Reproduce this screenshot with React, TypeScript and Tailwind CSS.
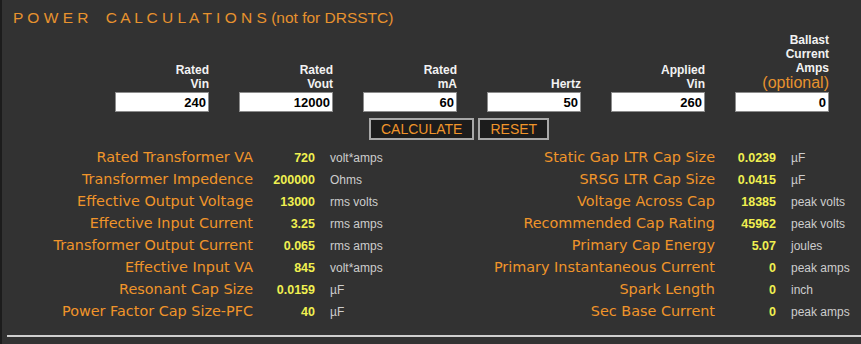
const inputs = [
  { label: ["Rated", "Vin"], value: "240" },
  { label: ["Rated", "Vout"], value: "12000" },
  { label: ["Rated", "mA"], value: "60" },
  { label: ["Hertz"], value: "50" },
  { label: ["Applied", "Vin"], value: "260" },
  { label: ["Ballast", "Current", "Amps"], value: "0", optional: true },
];

const leftRows = [
  ["Rated Transformer VA", "720", "volt*amps"],
  ["Transformer Impedence", "200000", "Ohms"],
  ["Effective Output Voltage", "13000", "rms volts"],
  ["Effective Input Current", "3.25", "rms amps"],
  ["Transformer Output Current", "0.065", "rms amps"],
  ["Effective Input VA", "845", "volt*amps"],
  ["Resonant Cap Size", "0.0159", "µF"],
  ["Power Factor Cap Size-PFC", "40", "µF"],
];

const rightRows = [
  ["Static Gap LTR Cap Size", "0.0239", "µF"],
  ["SRSG LTR Cap Size", "0.0415", "µF"],
  ["Voltage Across Cap", "18385", "peak volts"],
  ["Recommended Cap Rating", "45962", "peak volts"],
  ["Primary Cap Energy", "5.07", "joules"],
  ["Primary Instantaneous Current", "0", "peak amps"],
  ["Spark Length", "0", "inch"],
  ["Sec Base Current", "0", "peak amps"],
];

function ResultRow({
  row,
  labelWidth,
  valueWidth,
}: {
  row: string[];
  labelWidth: string;
  valueWidth: string;
}) {
  return (
    <div className="flex h-[22px] items-center">
      <div
        className={`${labelWidth} text-right text-[14.4px] text-[#f0952a] font-['DejaVu_Sans',sans-serif] whitespace-nowrap`}
      >
        {row[0]}
      </div>
      <div
        className={`${valueWidth} text-right text-[12.5px] font-bold text-[#f0f050]`}
      >
        {row[1]}
      </div>
      <div className="pl-[15px] text-[12px] text-[#cdcdcd] whitespace-nowrap">
        {row[2]}
      </div>
    </div>
  );
}

export default function App() {
  return (
    <div className="w-[861px] h-[344px] bg-[#323232] border-l-2 border-[#1c1c1c] font-['Liberation_Sans',Arial,sans-serif] overflow-hidden">
      {/* title */}
      <div className="pt-[8px] pl-[11px] h-[28px] text-[15.5px] leading-[20px] text-[#e8922e] whitespace-pre">
        {"P O W E R    C A L C U L A T I O N S (not for DRSSTC)"}
      </div>

      {/* inputs */}
      <div className="mt-[5px] pl-[113px] flex items-end gap-[30px]">
        {inputs.map((col, i) => (
          <div key={i} className="w-[94px] flex flex-col items-stretch">
            <div className="text-right text-[12px] leading-[14px] font-bold text-[#f2f2f2]">
              {col.label.map((l) => (
                <div key={l}>{l}</div>
              ))}
              {col.optional && (
                <div className="text-[16px] leading-[16px] font-normal text-[#e8922e]">
                  (optional)
                </div>
              )}
            </div>
            <input
              readOnly
              value={col.value}
              className="mt-[1px] h-[20px] w-[94px] bg-white border border-[#8c8c8c] pr-[2px] text-right text-[13px] font-bold text-black outline-none"
            />
          </div>
        ))}
      </div>

      {/* buttons */}
      <div className="mt-[6px] pl-[367px] flex gap-[4px]">
        <button className="h-[22px] px-[10px] bg-[#1c1c1c] border-2 border-[#a8a8a8] text-[14px] leading-none text-[#f0952a]">
          CALCULATE
        </button>
        <button className="h-[22px] px-[10px] bg-[#1c1c1c] border-2 border-[#a8a8a8] text-[14px] leading-none text-[#f0952a]">
          RESET
        </button>
      </div>

      {/* results */}
      <div className="mt-[7px] flex">
        <div className="w-[420px]">
          {leftRows.map((r) => (
            <ResultRow key={r[0]} row={r} labelWidth="w-[251px]" valueWidth="w-[62px]" />
          ))}
        </div>
        <div>
          {rightRows.map((r) => (
            <ResultRow key={r[0]} row={r} labelWidth="w-[293px]" valueWidth="w-[61px]" />
          ))}
        </div>
      </div>

      <div className="mt-[12px] ml-[5px] h-[2px] bg-[#cfcfcf]" />
    </div>
  );
}
